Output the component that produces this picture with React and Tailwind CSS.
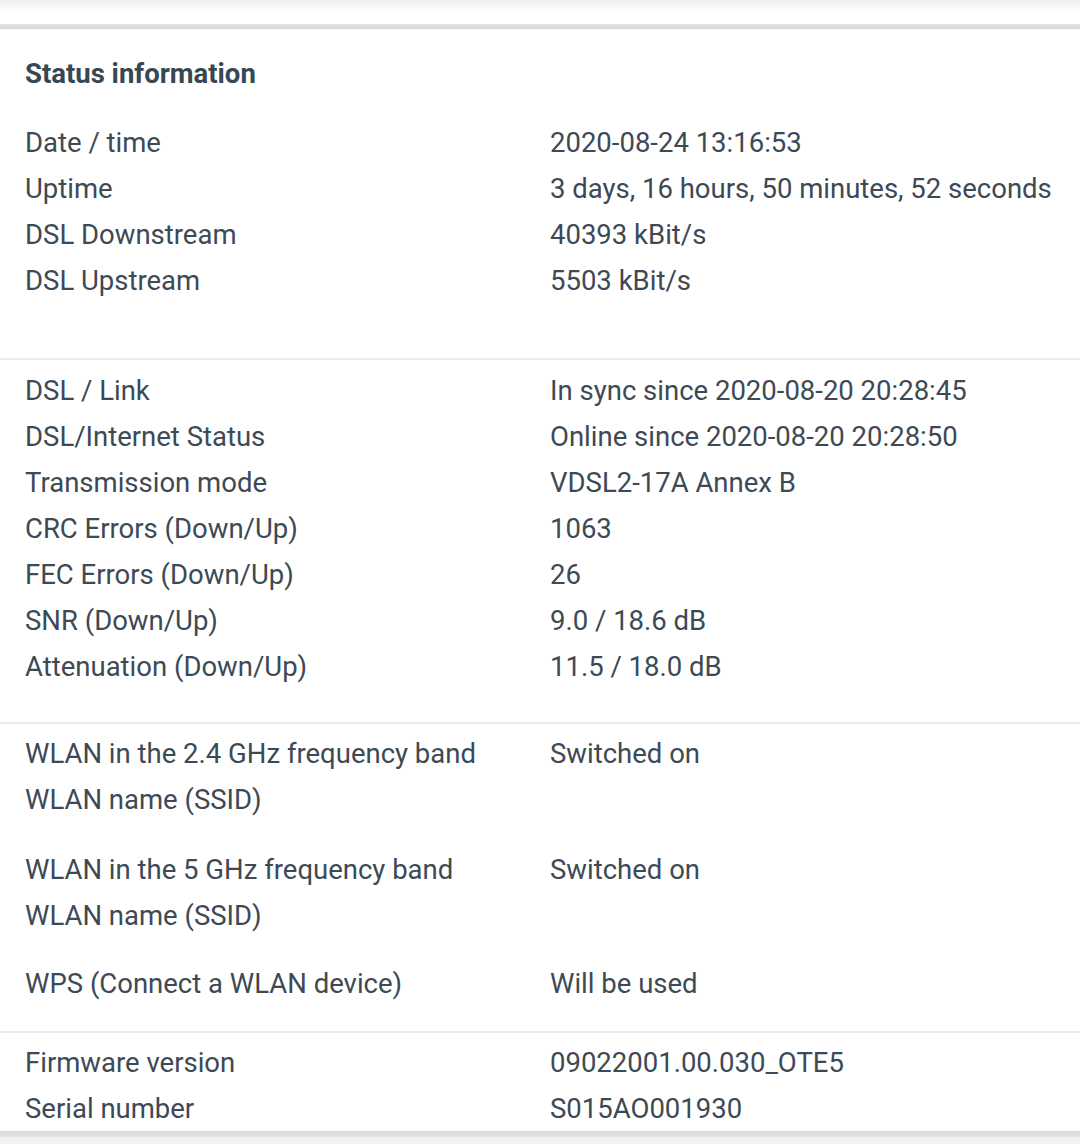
import React from 'react';

const Row = ({ label, value }) => (
  <div className="flex h-[46px] items-center pt-[2px]">
    <div className="w-[525px] shrink-0">{label}</div>
    <div>{value}</div>
  </div>
);

const Divider = () => <div className="h-[2px] bg-[#ececec]" />;

const App = () => {
  return (
    <div
      className="w-[1080px] h-[1144px] overflow-hidden bg-white text-[27.5px] text-[#3d4a55]"
      style={{ fontFamily: 'Roboto, "Noto Sans", sans-serif' }}
    >
      <div className="h-[24px] bg-gradient-to-b from-[#f0f0f0] via-white to-white" />
      <div className="h-[5px] bg-gradient-to-b from-[#e4e4e4] to-[#d6d6d6]" />

      <div className="pl-[25px] pt-[21px] pb-[55px]">
        <h2 className="h-[46px] flex items-center pt-[2px] font-bold text-[27.5px] text-[#384754]">Status information</h2>
        <div className="mt-[23px]">
          <Row label="Date / time" value="2020-08-24 13:16:53" />
          <Row label="Uptime" value="3 days, 16 hours, 50 minutes, 52 seconds" />
          <Row label="DSL Downstream" value="40393 kBit/s" />
          <Row label="DSL Upstream" value="5503 kBit/s" />
        </div>
      </div>
      <Divider />

      <div className="pl-[25px] pt-[7px] pb-[33px]">
        <Row label="DSL / Link" value="In sync since 2020-08-20 20:28:45" />
        <Row label="DSL/Internet Status" value="Online since 2020-08-20 20:28:50" />
        <Row label="Transmission mode" value="VDSL2-17A Annex B" />
        <Row label="CRC Errors (Down/Up)" value="1063" />
        <Row label="FEC Errors (Down/Up)" value="26" />
        <Row label="SNR (Down/Up)" value="9.0 / 18.6 dB" />
        <Row label="Attenuation (Down/Up)" value="11.5 / 18.0 dB" />
      </div>
      <Divider />

      <div className="pl-[25px] pt-[6px] pb-[25px]">
        <Row label="WLAN in the 2.4 GHz frequency band" value="Switched on" />
        <Row label="WLAN name (SSID)" value="" />
        <div className="h-[24px]" />
        <Row label="WLAN in the 5 GHz frequency band" value="Switched on" />
        <Row label="WLAN name (SSID)" value="" />
        <div className="h-[22px]" />
        <Row label="WPS (Connect a WLAN device)" value="Will be used" />
      </div>
      <Divider />

      <div className="pl-[25px] pt-[6px]">
        <Row label="Firmware version" value="09022001.00.030_OTE5" />
        <Row label="Serial number" value="S015AO001930" />
      </div>
      <div className="h-[6px] bg-gradient-to-b from-[#d8d8d8] to-[#e4e4e4]" />
      <div className="h-[8px] bg-[#f2f2f2]" />
    </div>
  );
};

export default App;
